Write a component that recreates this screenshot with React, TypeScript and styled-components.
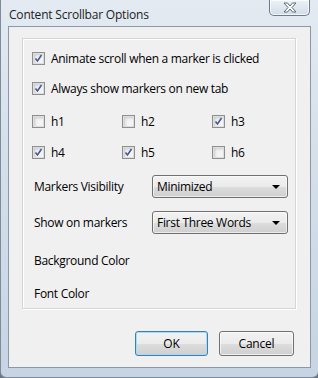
import styled, { createGlobalStyle } from 'styled-components';

const GlobalStyle = createGlobalStyle`
  html, body {
    margin: 0;
    padding: 0;
    background: #6b7380;
  }
`;

const FONT = `'Open Sans', 'Noto Sans', 'DejaVu Sans', sans-serif`;

const StyledWindow = styled.div`
  width: 318px;
  height: 378px;
  box-sizing: border-box;
  display: flex;
  flex-direction: column;
  padding: 0 7px 9px 7px;
  background: linear-gradient(to bottom, #e3eaf2 0%, #d5e0eb 40%, #c6d4e3 100%);
  border-left: 1px solid #7d8b9a;
  border-bottom: 1px solid #7d8b9a;
  border-radius: 0 0 6px 6px;
  font-family: ${FONT};
  font-size: 12px;
  letter-spacing: -0.3px;
  color: #000;
`;

const StyledTitleBar = styled.div`
  height: 27px;
  display: flex;
  align-items: flex-start;
  justify-content: space-between;
`;

const StyledTitle = styled.span`
  padding: 6px 0 0 1px;
  color: #222;
  font-size: 12px;
  letter-spacing: -0.2px;
`;

const StyledClose = styled.div`
  width: 41px;
  height: 16px;
  margin-right: 1px;
  box-sizing: border-box;
  border: 1px solid #6a7b92;
  border-top: none;
  border-radius: 0 0 5px 5px;
  background: linear-gradient(to bottom, #eef2f7, #d3dce7);
  box-shadow: inset 0 0 0 1px rgba(255, 255, 255, 0.7);
  display: flex;
  align-items: center;
  justify-content: center;
`;

const StyledClient = styled.div`
  flex: 1;
  display: flex;
  flex-direction: column;
  background: #f0f0f0;
  border: 1px solid #8c98a6;
  padding: 11px 14px 11px 13px;
`;

const StyledPanel = styled.div`
  height: 271px;
  box-sizing: border-box;
  border: 1px solid #d5d5d5;
  box-shadow: inset 1px 1px 0 #fff, 1px 1px 0 #fff;
  padding: 9px 0 0 9px;
  display: flex;
  flex-direction: column;
`;

const StyledRow = styled.div<{ $top: number }>`
  margin-top: ${(p) => p.$top}px;
  height: 20px;
  display: flex;
  align-items: center;
`;

const StyledFieldRow = styled.div<{ $top: number }>`
  margin-top: ${(p) => p.$top}px;
  height: 23px;
  display: flex;
  align-items: center;
`;

const StyledHeadingGrid = styled.div<{ $top: number }>`
  margin-top: ${(p) => p.$top}px;
  height: 20px;
  display: grid;
  grid-template-columns: 90px 90px 90px;
  align-items: center;
`;

const StyledCheck = styled.label`
  display: flex;
  align-items: center;
  gap: 6px;
`;

const StyledBox = styled.span`
  width: 13px;
  height: 13px;
  box-sizing: border-box;
  border: 1px solid #8e8f8f;
  background: #f4f4f4;
  box-shadow: inset 0 0 0 1px #dedede, inset 2px 2px 3px #c8c8c8;
  display: flex;
  align-items: center;
  justify-content: center;
`;

const StyledLabel = styled.span`
  width: 118px;
  padding-left: 2px;
`;

const StyledSelect = styled.div`
  width: 136px;
  height: 23px;
  box-sizing: border-box;
  border: 1px solid #707070;
  border-radius: 3px;
  background: linear-gradient(to bottom, #f2f2f2 0%, #ebebeb 50%, #dddddd 51%, #cfcfcf 100%);
  box-shadow: inset 0 0 0 1px rgba(255, 255, 255, 0.6);
  display: flex;
  align-items: center;
  justify-content: space-between;
  padding: 0 7px 0 4px;
`;

const StyledArrow = styled.span`
  width: 0;
  height: 0;
  border-left: 4px solid transparent;
  border-right: 4px solid transparent;
  border-top: 4px solid #000;
`;

const StyledFooter = styled.div`
  margin-top: 22px;
  display: flex;
  justify-content: flex-end;
  gap: 11px;
  padding-right: 2px;
`;

const StyledButton = styled.button<{ $default?: boolean }>`
  width: ${(p) => (p.$default ? 73 : 75)}px;
  height: 25px;
  box-sizing: border-box;
  border: 1px solid ${(p) => (p.$default ? '#3c7fb1' : '#707070')};
  border-radius: 3px;
  background: linear-gradient(to bottom, #f2f2f2 0%, #ebebeb 50%, #dddddd 51%, #cfcfcf 100%);
  box-shadow: inset 0 0 0 1px ${(p) => (p.$default ? '#a6dcf5' : 'rgba(255,255,255,0.7)')};
  font-family: ${FONT};
  font-size: 12px;
  letter-spacing: -0.2px;
  color: #000;
  padding: 0;
`;

const CheckBox = ({ checked }: { checked?: boolean }) => (
  <StyledBox>
    {checked && (
      <svg width="9" height="9" viewBox="0 0 9 9">
        <path d="M1.5 4.5 L3.5 7 L7.5 1" fill="none" stroke="#4a5a8f" strokeWidth="1.6" />
      </svg>
    )}
  </StyledBox>
);

const Check = ({ label, checked }: { label: string; checked?: boolean }) => (
  <StyledCheck>
    <CheckBox checked={checked} />
    <span>{label}</span>
  </StyledCheck>
);

const headings = [
  ['h1', false],
  ['h2', false],
  ['h3', true],
  ['h4', true],
  ['h5', true],
  ['h6', false],
] as const;

const App = () => (
  <>
    <GlobalStyle />
    <StyledWindow>
      <StyledTitleBar>
        <StyledTitle>Content Scrollbar Options</StyledTitle>
        <StyledClose>
          <svg width="14" height="11" viewBox="0 0 14 11">
            <path
              d="M1 1 H4.5 L7 4 L9.5 1 H13 L9 5.5 L13 10 H9.5 L7 7 L4.5 10 H1 L5 5.5 Z"
              fill="#fff"
              stroke="#5b6b80"
              strokeWidth="1"
              strokeLinejoin="round"
            />
          </svg>
        </StyledClose>
      </StyledTitleBar>
      <StyledClient>
        <StyledPanel>
          <StyledRow $top={0}>
            <Check label="Animate scroll when a marker is clicked" checked />
          </StyledRow>
          <StyledRow $top={10}>
            <Check label="Always show markers on new tab" checked />
          </StyledRow>
          <StyledHeadingGrid $top={13}>
            {headings.slice(0, 3).map(([h, c]) => (
              <Check key={h} label={h} checked={c} />
            ))}
          </StyledHeadingGrid>
          <StyledHeadingGrid $top={11}>
            {headings.slice(3).map(([h, c]) => (
              <Check key={h} label={h} checked={c} />
            ))}
          </StyledHeadingGrid>
          <StyledFieldRow $top={13}>
            <StyledLabel>Markers Visibility</StyledLabel>
            <StyledSelect>
              <span>Minimized</span>
              <StyledArrow />
            </StyledSelect>
          </StyledFieldRow>
          <StyledFieldRow $top={13}>
            <StyledLabel>Show on markers</StyledLabel>
            <StyledSelect>
              <span>First Three Words</span>
              <StyledArrow />
            </StyledSelect>
          </StyledFieldRow>
          <StyledRow $top={16}>
            <StyledLabel>Background Color</StyledLabel>
          </StyledRow>
          <StyledRow $top={13}>
            <StyledLabel>Font Color</StyledLabel>
          </StyledRow>
        </StyledPanel>
        <StyledFooter>
          <StyledButton $default>OK</StyledButton>
          <StyledButton>Cancel</StyledButton>
        </StyledFooter>
      </StyledClient>
    </StyledWindow>
  </>
);

export default App;
